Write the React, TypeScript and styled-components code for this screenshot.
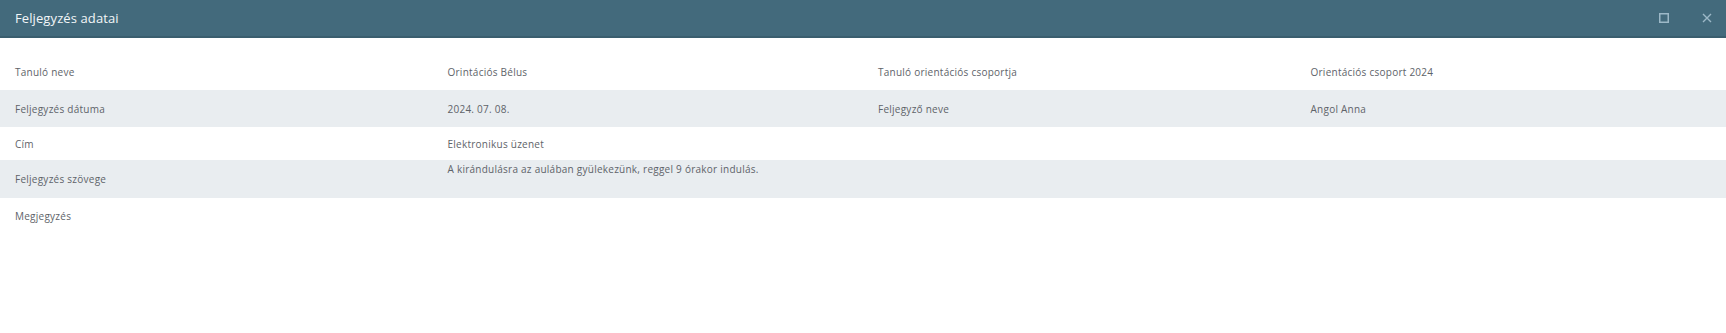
import React from "react";
import styled, { createGlobalStyle } from "styled-components";

type Cell = { label: string; value: string };
type Line = { cells: Array<Cell>; height: number; tall?: boolean };

const rows: Array<Line> = [
  {
    cells: [
      { label: "Tanuló neve", value: "Orintációs Bélus" },
      { label: "Tanuló orientációs csoportja", value: "Orientációs csoport 2024" },
    ],
    height: 36,
  },
  {
    cells: [
      { label: "Feljegyzés dátuma", value: "2024. 07. 08." },
      { label: "Feljegyző neve", value: "Angol Anna" },
    ],
    height: 37,
  },
  { cells: [{ label: "Cím", value: "Elektronikus üzenet" }], height: 33 },
  {
    cells: [
      {
        label: "Feljegyzés szövege",
        value: "A kirándulásra az aulában gyülekezünk, reggel 9 órakor indulás.",
      },
    ],
    height: 38,
    tall: true,
  },
  { cells: [{ label: "Megjegyzés", value: "" }], height: 36 },
];

const GlobalStyle = createGlobalStyle`
  body {
    margin: 0;
    background: #fff;
    font-family: "Open Sans", "Noto Sans", sans-serif;
  }
`;

const App: React.FC = () => {
  return (
    <>
      <GlobalStyle />
      <Dialog>
        <TitleBar>
          <Title>Feljegyzés adatai</Title>
          <Actions>
            <IconButton aria-label="maximize">
              <svg width="10" height="10" viewBox="0 0 10 10">
                <rect x="0.75" y="0.75" width="8.5" height="8.5" fill="none" stroke="currentColor" strokeWidth="1.5" />
              </svg>
            </IconButton>
            <IconButton aria-label="close">
              <svg width="10" height="10" viewBox="0 0 10 10">
                <path d="M1 1 L9 9 M9 1 L1 9" stroke="currentColor" strokeWidth="1.4" />
              </svg>
            </IconButton>
          </Actions>
        </TitleBar>
        <Body>
          {rows.map((row, i) => (
            <Row key={i} $striped={i % 2 === 1} $height={row.height}>
              {row.cells.map((c) => (
                <React.Fragment key={c.label}>
                  <Label>{c.label}</Label>
                  <Value $wide={row.cells.length === 1} $top={row.tall}>
                    {c.value}
                  </Value>
                </React.Fragment>
              ))}
            </Row>
          ))}
        </Body>
      </Dialog>
    </>
  );
};

export default App;

const Dialog = styled.div`
  width: 100%;
  height: 333px;
  background: #fff;
`;
const TitleBar = styled.div`
  height: 36px;
  background: #436a7c;
  border-bottom: 2px solid #3a5e6e;
  display: flex;
  align-items: center;
  justify-content: space-between;
  padding: 0 0 0 15px;
`;
const Title = styled.div`
  color: #f2f6f8;
  font-size: 13px;
  letter-spacing: 0.1px;
`;
const Actions = styled.div`
  display: flex;
  align-items: center;
  gap: 33px;
  padding-right: 14px;
`;
const IconButton = styled.div`
  width: 10px;
  height: 10px;
  color: #9cb8c7;
  display: flex;
`;
const Body = styled.div`
  padding-top: 16px;
`;
const Row = styled.div<{ $striped: boolean; $height: number }>`
  display: grid;
  grid-template-columns: repeat(4, 1fr);
  align-items: center;
  height: ${(p) => p.$height}px;
  background: ${(p) => (p.$striped ? "#e9edf0" : "#fff")};
`;
const Label = styled.div`
  padding-left: 15px;
  font-size: 10px;
  letter-spacing: 0.25px;
  color: #5e6369;
`;
const Value = styled.div<{ $wide: boolean; $top?: boolean }>`
  padding-left: 16px;
  font-size: 10px;
  letter-spacing: 0.25px;
  color: #5e6369;
  white-space: nowrap;
  grid-column: ${(p) => (p.$wide ? "span 3" : "auto")};
  align-self: ${(p) => (p.$top ? "start" : "center")};
  padding-top: ${(p) => (p.$top ? "2px" : "0")};
`;
